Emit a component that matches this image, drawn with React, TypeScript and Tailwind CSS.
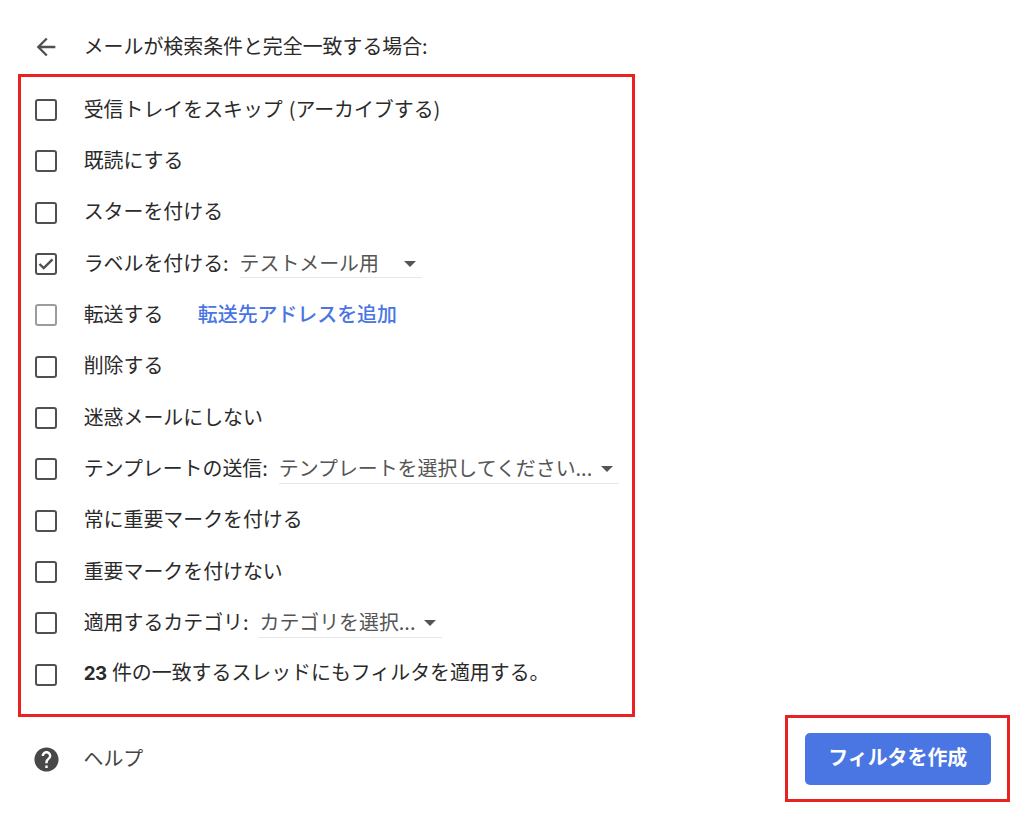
import React from 'react';
import { MdArrowBack, MdHelp } from 'react-icons/md';

type CheckboxProps = {
  checked?: boolean;
  disabled?: boolean;
}

type FilterRowProps = CheckboxProps & {
  children: React.ReactNode;
}

type SelectProps = {
  text: string;
  className: string;
}

const Checkbox: React.FC<CheckboxProps> = ({ checked, disabled }) => (
  <span
    className={`flex items-center justify-center shrink-0 w-[22px] h-[22px] border-2 rounded-[3px] ${
      disabled ? 'border-[#9c9c9c]' : 'border-[#505050]'
    }`}
  >
    {checked && (
      <svg viewBox="0 0 18 18" className="w-[18px] h-[18px]" fill="none" stroke="#505050" strokeWidth="2.4">
        <path d="M2.5 9l4.2 4.1 8.8-8.8" />
      </svg>
    )}
  </span>
);

const FilterRow: React.FC<FilterRowProps> = ({ checked, disabled, children }) => (
  <div className="flex items-center h-[51.33px]">
    <Checkbox checked={checked} disabled={disabled} />
    <div className="flex items-center ml-[26.7px] pb-[2.6px]">{children}</div>
  </div>
);

const Select: React.FC<SelectProps> = ({ text, className }) => (
  <div className={`flex items-center justify-between h-[30px] -mb-px pr-[6px] border-b border-[#e6e6e6] text-[#555555] ${className}`}>
    <span>{text}</span>
    <svg viewBox="0 0 12 6" className="w-[12px] h-[6px] mt-[2px]" fill="#555555">
      <path d="M0 0h12L6 6z" />
    </svg>
  </div>
);

const App = () => {
  return (
    <div className="w-[1024px] h-[818px] overflow-hidden bg-white pl-[17.5px] pt-[20px] font-['Noto_Sans_CJK_JP',sans-serif] text-[19.92px] leading-[28px] text-[#2a2a2a] whitespace-nowrap">
      <header className="flex items-center h-[54px] pl-[14.5px]">
        <MdArrowBack className="size-[28px] text-[#505050]" />
        <h1 className="ml-[23.7px] pb-[3px]">メールが検索条件と完全一致する場合:</h1>
      </header>

      <section className="w-[617px] h-[643px] border-3 border-[#ec2020] pl-[14.5px] pt-[7.4px]">
        <FilterRow>
          <span className="[word-spacing:1.5px]">受信トレイをスキップ (アーカイブする)</span>
        </FilterRow>
        <FilterRow>既読にする</FilterRow>
        <FilterRow>スターを付ける</FilterRow>
        <FilterRow checked>
          ラベルを付ける:
          <Select text="テストメール用" className="w-[182px] ml-[11px]" />
        </FilterRow>
        <FilterRow disabled>
          転送する
          <a href="#" className="ml-[34.5px] font-medium text-[#4976e2]">転送先アドレスを追加</a>
        </FilterRow>
        <FilterRow>削除する</FilterRow>
        <FilterRow>迷惑メールにしない</FilterRow>
        <FilterRow>
          テンプレートの送信:
          <Select text="テンプレートを選択してください..." className="w-[340px] ml-[11px]" />
        </FilterRow>
        <FilterRow>常に重要マークを付ける</FilterRow>
        <FilterRow>重要マークを付けない</FilterRow>
        <FilterRow>
          適用するカテゴリ:
          <Select text="カテゴリを選択..." className="w-[183px] ml-[11px]" />
        </FilterRow>
        <FilterRow>
          <p>
            <b className="mr-[5.5px] font-['Inter',sans-serif] text-[18.8px] font-bold tracking-[-0.6px]">23</b>
            件の一致するスレッドにもフィルタを適用する。
          </p>
        </FilterRow>
      </section>

      <footer className="flex items-start justify-between -mt-[2px] pr-[14px]">
        <div className="flex items-center h-[88px] pl-[14px] text-[#444444]">
          <MdHelp className="size-[29px] text-[#484848]" />
          <span className="ml-[23px] pb-[3px]">ヘルプ</span>
        </div>
        <div className="flex items-center justify-center w-[225.5px] h-[87px] pl-px border-3 border-[#e82222]">
          <button className="w-[186px] h-[52px] pb-[3px] rounded-[5px] bg-[#4976e2] text-white font-bold">
            フィルタを作成
          </button>
        </div>
      </footer>
    </div>
  );
};

export default App;
